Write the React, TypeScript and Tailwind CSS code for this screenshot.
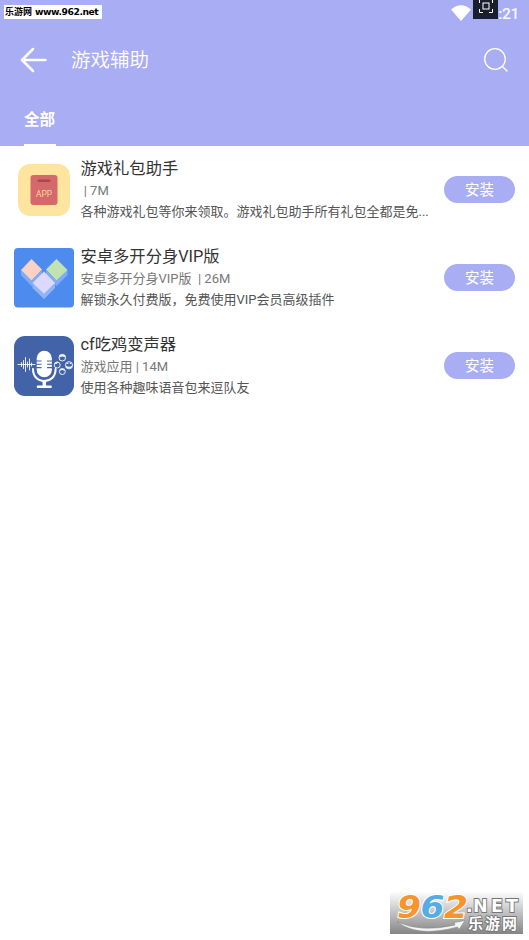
import type { ReactNode } from "react";

type AppItem = {
  name: string;
  meta: string;
  description: string;
  icon: ReactNode;
};

function GiftIcon() {
  return (
    <svg viewBox="0 0 60 60" className="size-[60px]">
      <rect x="4" y="4" width="52" height="52" rx="12" fill="#fde5a0" />
      <rect x="16.5" y="15" width="27" height="30" rx="3" fill="#d4686a" />
      <rect x="23.5" y="19.5" width="13" height="2.4" rx="1" fill="#a9484f" />
      <text x="30" y="37" textAnchor="middle" fontSize="8.4" fill="#fbd696" fontFamily="Roboto, sans-serif">
        APP
      </text>
    </svg>
  );
}

function CloneIcon() {
  return (
    <svg viewBox="0 0 60 60" className="size-[60px]">
      <rect width="60" height="59.5" rx="4" fill="#4e8bee" />
      <path d="M7 22 17.5 32.5 28 22v5L17.5 38 7 27z" fill="#7eacf5" />
      <path d="M32 22 42.5 32.5 53.5 22v5L42.5 38 32 27z" fill="#7eacf5" />
      <path d="M18.5 35 30 46 41 35v5L30 51 18.5 40z" fill="#8fb5f8" />
      <path d="M17.5 11 28 21.5 17.5 32.5 7 22z" fill="#fbd0c5" />
      <path d="M42.5 11 53.5 22 42.5 32.5 32 21.5z" fill="#c1e3b2" />
      <path d="M30 23.5 41 35 30 46 18.5 35z" fill="#dcd9fc" />
    </svg>
  );
}

function VoiceIcon() {
  return (
    <svg viewBox="0 0 60 60" className="size-[60px]">
      <rect width="60" height="60" rx="11" fill="#4363a8" />
      <rect x="22.7" y="14.8" width="15.2" height="26.5" rx="7.6" fill="#fff" />
      <path
        d="M22 25h5.5M22 28.3h5.5M22 31.6h5.5M38.5 25H33M38.5 28.3H33M38.5 31.6H33"
        stroke="#4363a8"
        strokeWidth="1.1"
      />
      <g fill="none" stroke="#fff" strokeLinecap="round">
        <path d="M19 33c0 7.5 4.8 12 11.3 12s11.3-4.5 11.3-12" strokeWidth="2" />
        <path d="M30.3 45v5" strokeWidth="3.5" strokeLinecap="butt" />
        <path d="M24 50.8h12.6" strokeWidth="2.6" />
        <path
          d="M4 28.5h17M7.5 26.5v4M9.5 24.5v8M11.5 21.5v14M13.5 26v5M15.5 23v11M17.5 27v3"
          strokeWidth="1"
          opacity="0.85"
        />
      </g>
      <g fill="none" stroke="#e9eefb" strokeWidth="1">
        <circle cx="48.3" cy="21.7" r="3.3" />
        <circle cx="43.2" cy="29" r="3" />
        <circle cx="55" cy="29.3" r="3.6" />
        <circle cx="48.3" cy="35.5" r="3" />
      </g>
      <g fill="#e9eefb">
        <path d="M45 21.5a3.3 3.3 0 0 1 6.6 0l-3.3-1zM45.4 35a3 3 0 0 1 5.8 0l-3-1z" />
        <path d="M40.5 28a3 3 0 0 1 4-2l-2 2zM52 29.5q3 2.5 6 0v2q-3 2-6 0zM52.8 27h1.5v1h-1.5zM55.8 27h1.5v1h-1.5z" />
      </g>
    </svg>
  );
}

const apps: AppItem[] = [
  {
    name: "游戏礼包助手",
    meta: " | 7M",
    description: "各种游戏礼包等你来领取。游戏礼包助手所有礼包全都是免...",
    icon: <GiftIcon />,
  },
  {
    name: "安卓多开分身VIP版",
    meta: "安卓多开分身VIP版  | 26M",
    description: "解锁永久付费版，免费使用VIP会员高级插件",
    icon: <CloneIcon />,
  },
  {
    name: "cf吃鸡变声器",
    meta: "游戏应用 | 14M",
    description: "使用各种趣味语音包来逗队友",
    icon: <VoiceIcon />,
  },
];

function StatusBar() {
  return (
    <div className="flex h-[28px] items-start justify-between">
      <div className="mt-[5px] ml-1 flex h-[14px] w-[98px] items-center bg-white pl-px text-[9px] font-bold whitespace-pre text-black">
        <span className="font-['Noto_Sans_CJK_SC',sans-serif]">乐游网</span>
        <span className="ml-[3px] font-['DejaVu_Sans',sans-serif] text-[9.2px] tracking-[-0.45px]">
          www.962.net
        </span>
      </div>
      <div className="flex items-start pr-[10px]">
        <svg viewBox="0 0 20 16" className="mt-[5px] h-4 w-5" fill="#fff">
          <path d="M0 4.5Q10-4 20 4.500L10 16z" />
        </svg>
        <div className="ml-0.5 flex h-[19px] w-[25px] justify-center bg-[#18202f]">
          <svg viewBox="0 0 14 14" className="-mt-px size-[14px]" fill="none" stroke="#fff" strokeWidth="1">
            <path d="M.5 4V.5H4M10 .5h3.500V4M13.500 10v3.500H10M4 13.500H.5V10" />
            <rect x="4" y="4" width="6" height="6" />
          </svg>
        </div>
        <span className="mt-[5px] text-[15.5px] leading-[18px] font-medium tracking-[-0.3px] text-white/90">:21</span>
      </div>
    </div>
  );
}

function Header() {
  return (
    <header className="flex h-[146px] flex-col bg-[#a9adf4]">
      <StatusBar />
      <div className="flex h-16 items-center pr-[21px] pl-5 text-white">
        <svg
          viewBox="0 0 28 26"
          className="h-[26px] w-7"
          fill="none"
          stroke="currentColor"
          strokeWidth="2.5"
          strokeLinecap="round"
          strokeLinejoin="round"
        >
          <path d="M13 2 2 13l11 11M2 13h23.5" />
        </svg>
        <h1 className="mt-[2px] ml-[23px] text-[19.5px] leading-7 font-[350]">游戏辅助</h1>
        <svg viewBox="0 0 24 24" className="ml-auto size-6" fill="none" stroke="currentColor" strokeWidth="1.3">
          <circle cx="11" cy="11" r="10.3" />
          <path d="m18.5 18.5 4.5 4.5" strokeLinecap="round" />
        </svg>
      </div>
      <nav className="flex flex-1 pl-6">
        <button className="flex w-8 flex-col items-start justify-between pt-4 text-[15.5px] leading-6 font-bold text-white">
          <span>全部</span>
          <span className="h-0.5 w-full bg-white" />
        </button>
      </nav>
    </header>
  );
}

function AppRow({ app }: { app: AppItem }) {
  return (
    <li className="flex h-[88px] items-center px-[14px]">
      {app.icon}
      <div className="ml-[6.5px] w-[352px] min-w-0">
        <h2 className="text-[16.3px] leading-6 text-[#333]">{app.name}</h2>
        <p className="text-[13px] leading-5 whitespace-pre text-[#777]">{app.meta}</p>
        <p className="text-[13px] leading-[22px] whitespace-nowrap text-[#555]">{app.description}</p>
      </div>
      <button className="-mt-px ml-auto h-[27px] w-[71px] shrink-0 rounded-full bg-[#a9adf4] pt-px text-[14.5px] leading-[28px] text-white">
        安装
      </button>
    </li>
  );
}

function Watermark() {
  return (
    <svg
      viewBox="0 0 133 42"
      className="absolute top-[892px] left-[390px] h-[42px] w-[133px]"
    >
      <defs>
        <linearGradient id="fade" x1="0" y1="0" x2="0" y2="1">
          <stop offset="0" stopColor="#fdfdfd" />
          <stop offset="1" stopColor="#858585" />
        </linearGradient>
      </defs>
      <rect width="133" height="42" fill="url(#fade)" />
      <g
        fontFamily="'DejaVu Sans', sans-serif"
        fontWeight="bold"
        fontStyle="italic"
        fontSize="32"
        stroke="#fff"
        strokeWidth="2"
        paintOrder="stroke"
      >
        <text x="7" y="26" textLength="24" lengthAdjust="spacingAndGlyphs" fill="#f7942b">9</text>
        <text x="30.5" y="26" textLength="24" lengthAdjust="spacingAndGlyphs" fill="#55aee3">6</text>
        <text x="54" y="26" textLength="24" lengthAdjust="spacingAndGlyphs" fill="#f7942b">2</text>
      </g>
      <path
        d="M7 29.5Q30 41 65 33l-1-2.500 11-2-6 9-1.500-2.500Q27 46 7 29.500z"
        fill="#f4f4f4"
        stroke="#888"
        strokeWidth="0.6"
      />
      <g fill="#fff" stroke="#777" strokeWidth="1.8" paintOrder="stroke" fontWeight="bold">
        <text x="76 83 101 116" y="20" fontSize="17.5" fontFamily="'DejaVu Sans', sans-serif">
          .NET
        </text>
        <text x="78" y="37.3" fontSize="15" textLength="49" fontFamily="'Noto Sans CJK SC', sans-serif">
          乐游网
        </text>
      </g>
    </svg>
  );
}

export default function App() {
  return (
    <div className="relative h-[940px] w-[529px] overflow-hidden bg-white font-[Roboto,'Noto_Sans_CJK_SC',sans-serif]">
      <Header />
      <ul>
        {apps.map((app) => (
          <AppRow key={app.name} app={app} />
        ))}
      </ul>
      <Watermark />
    </div>
  );
}
